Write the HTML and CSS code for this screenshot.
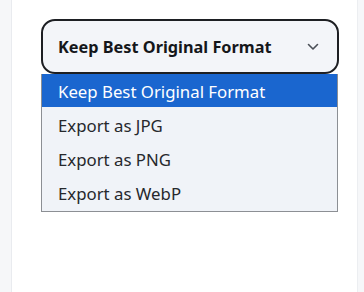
FILE: index.html
```html
<!DOCTYPE html>
<html lang="en">
  <head>
    <meta charset="UTF-8" />
    <meta name="viewport" content="width=device-width, initial-scale=1.0" />
    <title>Export format</title>
    <link rel="stylesheet" href="styles.css">
  </head>
  <body>
    <main class="panel">
      <div class="picker">
        <!-- Select button -->
        <div class="select">
          <span class="selectLabel">Keep Best Original Format</span>
          <svg class="chevron" width="12" height="8" viewBox="0 0 12 8">
            <path d="M1.5 1.5 L6 6 L10.5 1.5" fill="none" stroke="#4a4f57" stroke-width="1.6" stroke-linecap="round" stroke-linejoin="round"/>
          </svg>
        </div>
        <!-- Options list -->
        <ul class="options">
          <li class="option active">Keep Best Original Format</li>
          <li class="option">Export as JPG</li>
          <li class="option">Export as PNG</li>
          <li class="option">Export as WebP</li>
        </ul>
      </div>
    </main>
  </body>
</html>
```

FILE: styles.css
```css
/* Reset */
body {
  margin: 0;
  padding: 0;
  background: #f6f7f9;
  font-family: "Noto Sans", "Open Sans", sans-serif;
}

/* ===== Panel ===== */
.panel {
  margin-left: 11px;
  width: 347px;
  min-height: 292px;
  background: #ffffff;
  border-left: 1px solid #e9ebef;
  border-right: 1px solid #eceef1;
  box-sizing: border-box;
  padding: 19px 0 0 29px;
}

.picker {
  width: 298px;
}

/* ===== Select ===== */
.select {
  height: 55px;
  box-sizing: border-box;
  border: 2px solid #1d1f23;
  border-radius: 14px;
  background: #f3f5f9;
  display: flex;
  align-items: center;
  justify-content: space-between;
  padding: 1px 18px 0 15px;
}

.selectLabel {
  font-size: 16.3px;
  font-weight: 700;
  color: #15171b;
}

.chevron {
  display: block;
}

/* ===== Options ===== */
.options {
  list-style: none;
  margin: 0;
  padding: 0 0 2px 0;
  width: 297px;
  box-sizing: border-box;
  background: #f0f3f8;
  border: 1px solid #8c8f94;
  border-top: none;
}

.option {
  height: 30px;
  line-height: 30px;
  padding: 3px 0 0 16px;
  font-size: 16.8px;
  color: #26282c;
}

.option:nth-child(n+2) {
  padding-top: 4px;
}

.option.active {
  background: #1a66cf;
  color: #ffffff;
}
```
